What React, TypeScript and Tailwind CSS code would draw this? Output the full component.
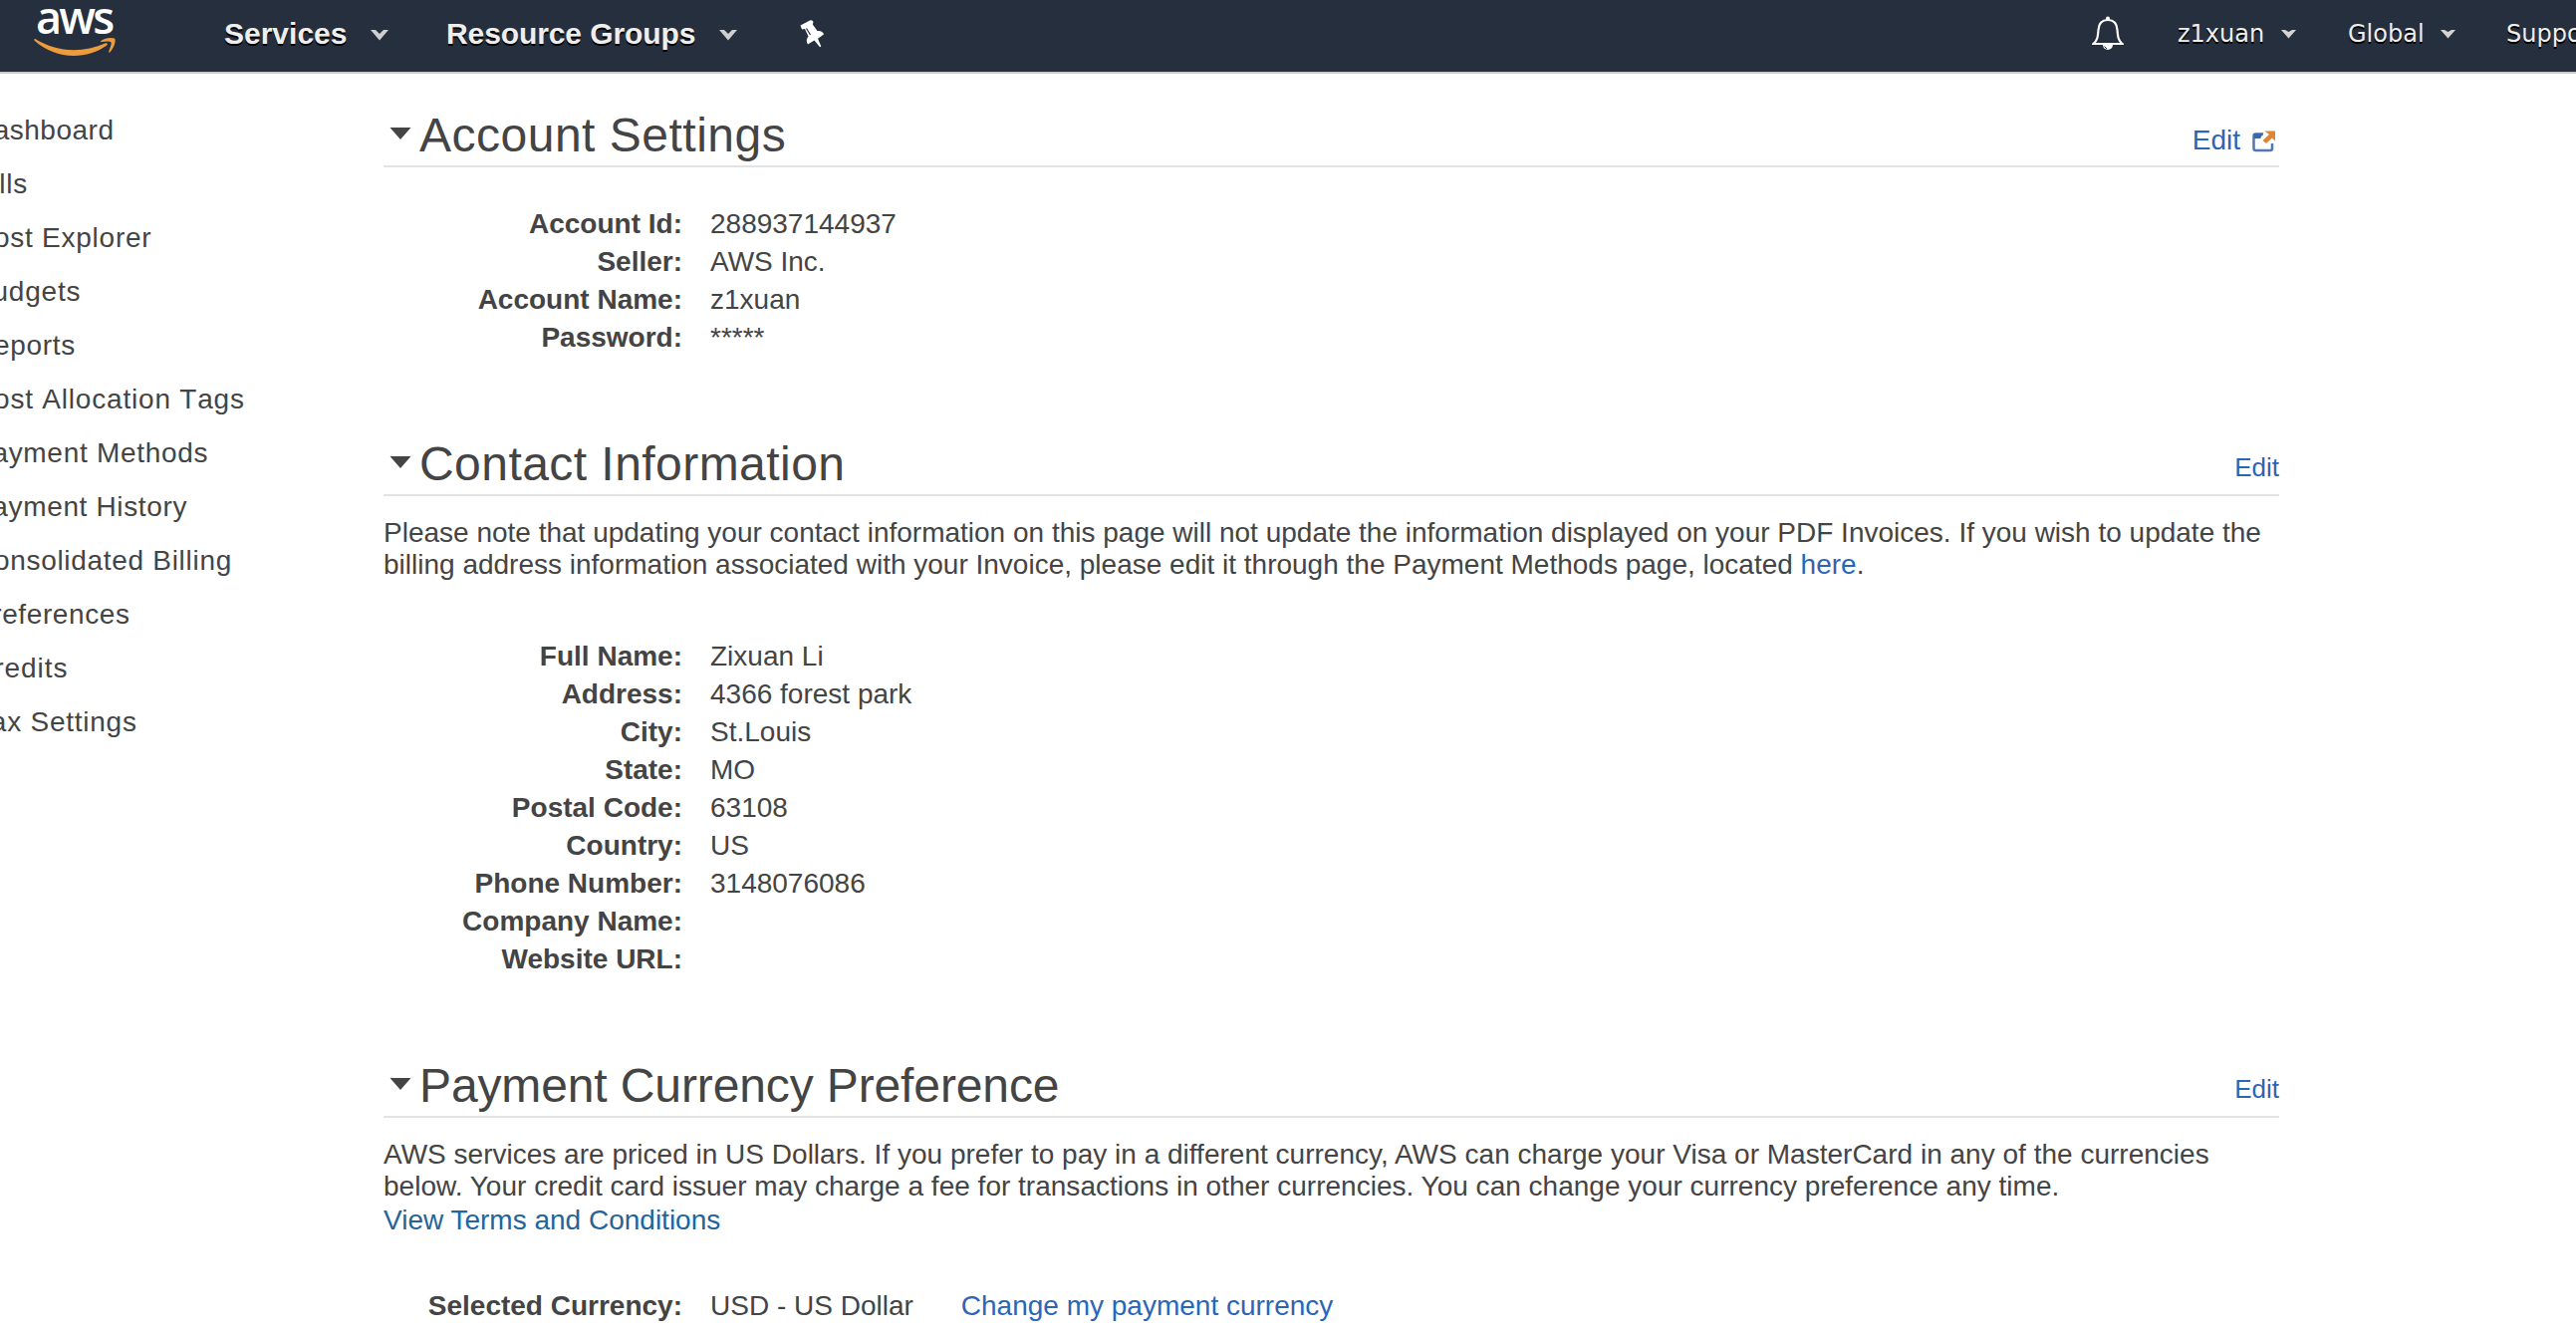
import React from "react";

const sidebarItems: [string, string][] = [
  ["Dashboard", "tracking-[0.5px]"],
  ["Bills", "tracking-[0.7px]"],
  ["Cost Explorer", "tracking-[0.75px]"],
  ["Budgets", "tracking-[0.8px]"],
  ["Reports", "tracking-[0.7px]"],
  ["Cost Allocation Tags", "tracking-[0.8px] [font-kerning:none]"],
  ["Payment Methods", "tracking-[0.7px]"],
  ["Payment History", "tracking-[0.65px]"],
  ["Consolidated Billing", "tracking-[0.7px]"],
  ["Preferences", "tracking-[0.6px]"],
  ["Credits", "tracking-[0.95px]"],
  ["Tax Settings", "tracking-[0.75px] [font-kerning:none]"],
];

function AwsLogo() {
  return (
    <div className="relative ml-[34px] h-[72px] w-[84px] shrink-0">
      <span className="absolute left-[2px] top-[-8px] font-['Open_Sans'] text-[45px] leading-[50px] font-semibold tracking-[-2.800px] text-white">
        aws
      </span>
      <svg className="absolute left-0 top-[36px]" width="82" height="22" viewBox="0 0 84 22" preserveAspectRatio="none">
        <path d="M0.5 3.2C0.2 4 0.5 4.8 1.5 5.6C12 14.5 26 20 41 20C53 20 66 16 75 9.500C76.300 8.300 75.500 6.800 74 7.300C63 12 52 14.200 41 14.200C27 14.200 13 10 1.800 3.200C1.200 2.800 0.700 2.800 0.500 3.200Z" fill="#ec9c3c" />
        <path d="M69 5C73 2 79 1.200 83 2.500C85 4.500 82 13 78 16.500C77.300 17 76.800 16.500 77 15.800C78.500 12 80.200 7.500 79.300 6.300C78 5 73 5.300 69.500 6C68.500 6.100 68.300 5.500 69 5Z" fill="#ec9c3c" />
      </svg>
    </div>
  );
}

function Caret({ big }: { big?: boolean }) {
  return big ? (
    <svg width="18" height="11" viewBox="0 0 18 11" className="mt-[3px] shrink-0">
      <path d="M0 0H5L9 4L13 0H18L9 10.500Z" fill="#cfcfcf" />
    </svg>
  ) : (
    <svg width="15" height="9" viewBox="0 0 15 9" className="shrink-0">
      <path d="M0 0H4L7.500 2L11 0H15L7.500 8.500Z" fill="#d4d4d4" />
    </svg>
  );
}

function Heading({
  title,
  track,
  edit,
  children,
}: {
  title: string;
  track: string;
  edit: string;
  children: React.ReactNode;
}) {
  return (
    <div className="flex h-[60px] items-start justify-between border-b-2 border-[#e3e3e3]">
      <h2 className="flex items-start">
        <svg width="22" height="12" viewBox="0 0 22 12" className="mt-[20px] ml-[6px] mr-[8px]">
          <path d="M0.500 0H21.500L11 12Z" fill="#444" />
        </svg>
        <span className={"text-[48px] leading-[56px] whitespace-nowrap " + track}>{title}</span>
      </h2>
      <a className={"flex items-center leading-[32px] text-[#2b65b7] " + edit}>{children}</a>
    </div>
  );
}

function Rows({ rows }: { rows: [string, string][] }) {
  return (
    <dl className="flex flex-col">
      {rows.map(([k, v]) => (
        <div key={k} className="flex h-[38px] items-center leading-[38px]">
          <dt className="w-[300px] text-right font-bold whitespace-nowrap">{k}</dt>
          <dd className="ml-[28px] whitespace-nowrap">{v}</dd>
        </div>
      ))}
    </dl>
  );
}

export default function App() {
  return (
    <div className="h-[1344px] w-[2586px] overflow-hidden bg-white font-['Liberation_Sans',sans-serif] text-[28px] text-[#444]">
      <header className="flex h-[74px] items-start border-b-2 border-[#ccc] bg-[#262f3e] text-[#eee]">
        <AwsLogo />
        <div className="flex h-[67px] items-center text-[30px] font-bold whitespace-nowrap [text-shadow:0_2px_0_#000]">
          <span className="ml-[107px] w-[123px]">Services</span>
          <span className="ml-[24px]"><Caret big /></span>
          <span className="ml-[58px] w-[249px] tracking-[-0.1px]">Resource Groups</span>
          <span className="ml-[25px]"><Caret big /></span>
          <svg className="ml-[63px]" width="25" height="28" viewBox="0 0 25 28">
            <path d="M0.500 5.500L10 0.500Q12.500 -0.500 13.500 2L12.800 4.500L17.500 11C20.500 10.500 23.500 12 24 14.500L18 18.800L21.300 26.500L20 27.300L14.500 20.500L8 24.500C6.200 22 6.500 19 8.500 16.500L5 9L2 9.500Z" fill="#fff" />
            <path d="M6.500 8.500L10.500 15" stroke="#262f3e" strokeWidth="1.200" />
          </svg>
        </div>
        <div className="ml-auto flex h-[68px] items-center font-['DejaVu_Sans'] text-[24px] whitespace-nowrap [text-shadow:0_2px_0_#000]">
          <svg width="32" height="36" viewBox="0 0 32 36" fill="none" stroke="#fff" strokeWidth="2.200">
            <path d="M1.500 28H30.500C26 24 26 20 25.500 14C25 7 21 4 16 4C11 4 7 7 6.500 14C6 20 6 24 1.500 28Z" />
            <path d="M11 29A5 5 0 0 0 21 29Z" fill="#fff" stroke="none" />
            <path d="M12.500 30.500L15 33" stroke="#262f3e" strokeWidth="1" />
            <circle cx="16" cy="2.500" r="2" fill="#fff" stroke="none" />
          </svg>
          <span className="ml-[54px] w-[89px]">z1xuan</span>
          <span className="ml-[15px]"><Caret /></span>
          <span className="ml-[52px] w-[78px]">Global</span>
          <span className="ml-[15px]"><Caret /></span>
          <span className="ml-[51px] w-[70px]">Support</span>
        </div>
      </header>
      <div className="flex">
        <nav className="ml-[-27px] w-[412px] shrink-0 pt-[30px]">
          {sidebarItems.map(([t, c]) => (
            <a key={t} className={"block h-[54px] leading-[54px] whitespace-nowrap " + c}>{t}</a>
          ))}
        </nav>
        <main className="w-[1903px] shrink-0 pt-[34px]">
          <section className="h-[330px]">
            <Heading title="Account Settings" track="tracking-[0.5px]" edit="mt-[17px] text-[28px] mr-[3px]">
              Edit
              <svg className="ml-[12px] mt-[2px]" width="24" height="22" viewBox="0 0 24 22" fill="none">
                <path d="M11 3.500H3.500Q1.500 3.500 1.500 5.500V18Q1.500 20 3.500 20H18Q20 20 20 18V13" stroke="#4d78b0" strokeWidth="2.500" />
                <path d="M2 3H11L8 8H2Z" fill="#3a69a6" />
                <path d="M12.500 0.500H23V10.500L20 7.500L14 13L10.500 10L17 4Z" fill="#dd8534" />
              </svg>
            </Heading>
            <div className="mt-[38px]">
              <Rows rows={[["Account Id:", "288937144937"], ["Seller:", "AWS Inc."], ["Account Name:", "z1xuan"], ["Password:", "*****"]]} />
            </div>
          </section>
          <section className="h-[624px]">
            <Heading title="Contact Information" track="tracking-[0.45px]" edit="mt-[15px] text-[26px]">Edit</Heading>
            <p className="mt-[21px] leading-[32px] whitespace-nowrap">
              Please note that updating your contact information on this page will not update the information displayed on your PDF Invoices. If you wish to update the
              <br />
              billing address information associated with your Invoice, please edit it through the Payment Methods page, located <a className="text-[#2b65b7]">here</a>.
            </p>
            <div className="mt-[57px]">
              <Rows rows={[["Full Name:", "Zixuan Li"], ["Address:", "4366 forest park"], ["City:", "St.Louis"], ["State:", "MO"], ["Postal Code:", "63108"], ["Country:", "US"], ["Phone Number:", "3148076086"], ["Company Name:", ""], ["Website URL:", ""]]} />
            </div>
          </section>
          <section>
            <Heading title="Payment Currency Preference" track="tracking-[-0.12px]" edit="mt-[15px] text-[26px]">Edit</Heading>
            <p className="mt-[21px] leading-[32px] whitespace-nowrap tracking-[0.01px]">
              AWS services are priced in US Dollars. If you prefer to pay in a different currency, AWS can charge your Visa or MasterCard in any of the currencies
              <br />
              below. Your credit card issuer may charge a fee for transactions in other currencies. You can change your currency preference any time.
            </p>
            <a className="mt-[2px] block leading-[32px] text-[#23649b]">View Terms and Conditions</a>
            <div className="mt-[51px] flex">
              <Rows rows={[["Selected Currency:", "USD - US Dollar"]]} />
              <a className="ml-[48px] leading-[38px] text-[#2b65b7]">Change my payment currency</a>
            </div>
          </section>
        </main>
      </div>
    </div>
  );
}
